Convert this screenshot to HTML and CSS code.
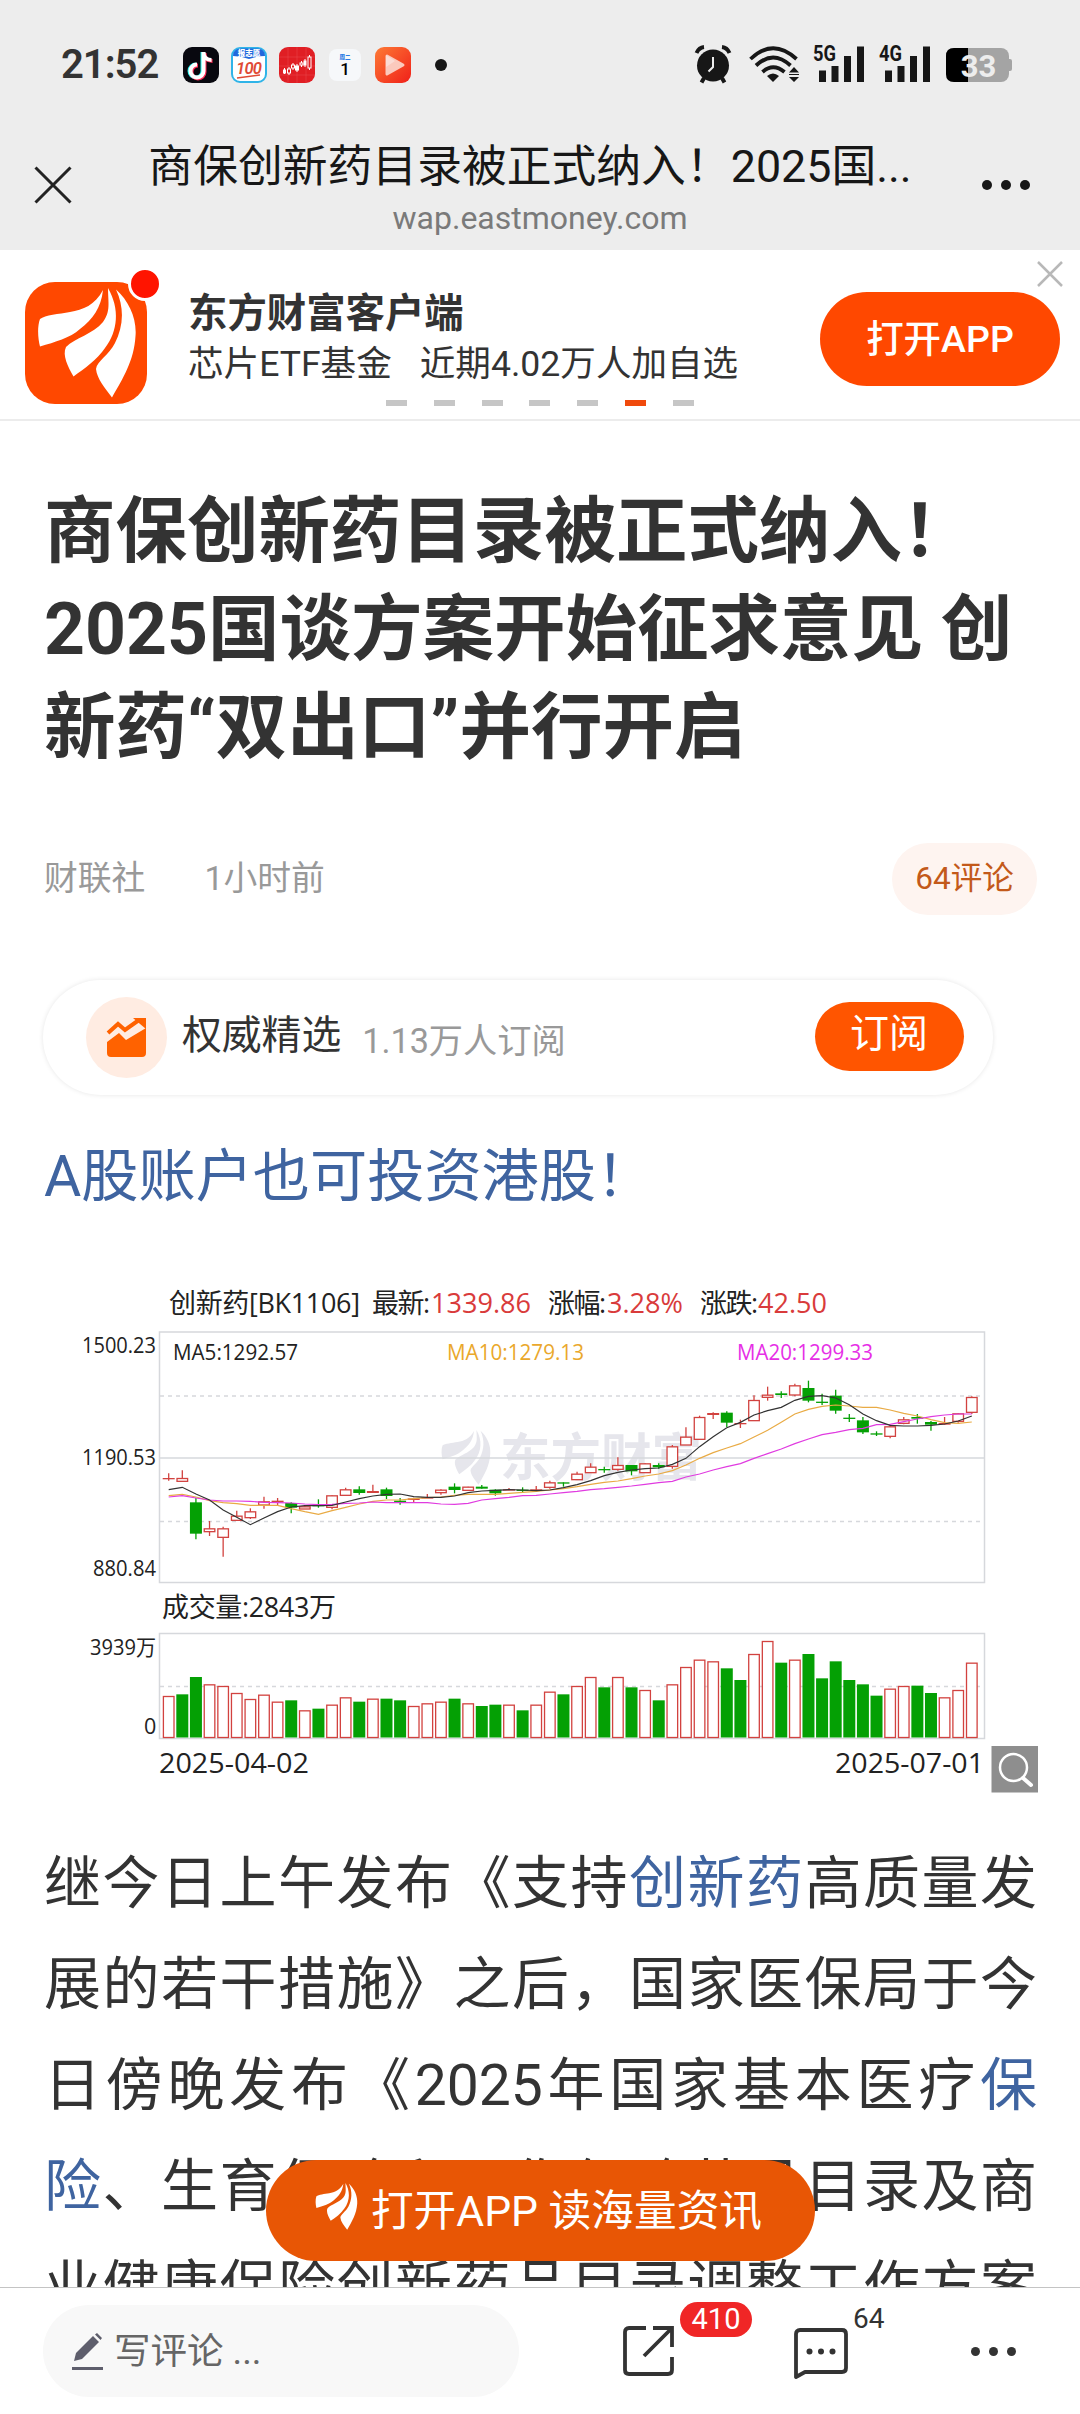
FILE: index.html
```html
<!DOCTYPE html>
<html lang="zh-CN">
<head>
  <meta charset="UTF-8">
  <meta name="viewport" content="width=device-width, initial-scale=1.0">
  <title>商保创新药目录被正式纳入！</title>
  <link rel="stylesheet" href="styles.css">
</head>
<body>
<svg class="defs" width="0" height="0">
  <symbol id="logo" viewBox="13 7 98 110">
    <path d="M78 9C70 24 58 29 45 31C34 33 20 34 15 38C12 46 13 58 15 65.5C30 61 45 57 55 48C68 38 76 27 78 9Z"/>
    <path d="M83 7C83 22 86 30 78 41C68 53 50 57 41 66C37 74 43 86 48.5 95.5C60 87 72 79 80 67C93 50 95 28 83 7Z"/>
    <path d="M91 8.5C104 20 112 38 110.5 55C109 80 98 97 87 116.5C80 107 72 98 71 88C72 80 84 74 90 62C98 46 100 28 91 8.5Z"/>
  </symbol>
</svg>

<header class="top">
  <div class="status-bar">
    <div class="time">21:52</div>
    <div class="app-icons">
      <svg width="36" height="36" viewBox="0 0 36 36">
        <rect width="36" height="36" rx="9" fill="#08080f"/>
        <g fill="none" stroke-width="4">
          <path d="M20.500 5v19a6.500 6.500 0 1 1-6.500-6.500M20.500 5c0 5 3 8 8 8" stroke="#25f4ee" transform="translate(-1 0)"/>
          <path d="M20.500 5v19a6.500 6.500 0 1 1-6.500-6.500M20.500 5c0 5 3 8 8 8" stroke="#fe2c55" transform="translate(1 1)"/>
          <path d="M20.500 5v19a6.500 6.500 0 1 1-6.500-6.500M20.500 5c0 5 3 8 8 8" stroke="#fff"/>
        </g>
      </svg>
      <svg width="36" height="36" viewBox="0 0 36 36">
        <rect x="1" y="1" width="34" height="34" rx="8" fill="#fff" stroke="#2fb4e8" stroke-width="2"/>
        <path d="M2 9Q2 1.500 10 1.500H26Q34 1.500 34 9Q26 9 18 12Q10 9 2 9Z" fill="#2068dc"/>
        <text x="18" y="8.500" class="tiny" text-anchor="middle" fill="#fff">报志愿</text>
        <text x="5" y="26.500" class="hundred" textLength="26">100</text>
        <path d="M6 31L29 28" stroke="#e04a35" stroke-width="1.500"/>
      </svg>
      <svg width="36" height="36" viewBox="0 0 36 36">
        <rect width="36" height="36" rx="9" fill="#e01e24"/>
        <path d="M0 10H36M0 19H36M0 28H36M9 0V36M18 0V36M27 0V36" stroke="#ea4a4c" stroke-width=".5"/>
        <g stroke="#fff" fill="none">
          <path d="M5.500 21v6M10 20v8M14 16v7M18 17v8M22.500 14v6M26 12v8M30.500 8v15"/>
          <rect x="4.500" y="23" width="2" height="3" fill="#fff"/><rect x="8.500" y="22" width="3" height="4" fill="#e01e24"/>
          <rect x="12.500" y="18" width="3" height="3" fill="#e01e24"/><rect x="16.500" y="19" width="3" height="4" fill="#fff"/>
          <rect x="21" y="16" width="3" height="2" fill="#e01e24"/><rect x="25" y="14" width="2" height="4" fill="#fff"/>
          <rect x="29" y="10" width="3" height="11" fill="#e01e24"/>
        </g>
      </svg>
      <svg width="36" height="36" viewBox="0 0 36 36">
        <rect x="2" y="2" width="32" height="32" rx="8" fill="#f6f8fa"/>
        <text x="18" y="12" class="tiny small" text-anchor="middle" fill="#2a7be4">周二</text>
        <text x="18" y="27.500" class="day" text-anchor="middle">1</text>
      </svg>
      <svg width="36" height="36" viewBox="0 0 36 36">
        <defs>
          <linearGradient id="play" x1="0" y1="0" x2="1" y2="1">
            <stop offset="0" stop-color="#fd7a35"/><stop offset="1" stop-color="#f02019"/>
          </linearGradient>
        </defs>
        <rect width="36" height="36" rx="9" fill="url(#play)"/>
        <path d="M12 9L28 18L12 27Z" fill="#fbc9bd" stroke="#fbc9bd" stroke-width="3" stroke-linejoin="round"/>
        <path d="M11 8L20 14L11 20Z" fill="#fbdbd4"/>
      </svg>
    </div>
    <span class="more-dot"></span>
    <div class="system-icons">
      <svg class="alarm" width="38" height="38" viewBox="0 0 38 38">
        <circle cx="19" cy="20.500" r="16" fill="#171717"/>
        <path d="M2.500 8Q5 2.500 10 2M35.500 8Q33 2.500 28 2" stroke="#171717" stroke-width="4" fill="none"/>
        <path d="M10 33L7.500 37.500M28 33L30.500 37.500" stroke="#171717" stroke-width="4"/>
        <path d="M19 12v10l-4.500 4.500" stroke="#ededed" stroke-width="2" fill="none"/>
      </svg>
      <svg class="wifi" width="51" height="37" viewBox="0 0 51 37">
        <g fill="none" stroke="#171717" stroke-width="3.800">
          <path d="M1.500 13Q24 -8.500 47.500 13"/>
          <path d="M7 19.500Q24 3.500 41.500 19.500"/>
          <path d="M13.500 26Q24 16.500 35.500 26"/>
        </g>
        <path d="M18 30Q24 25 30 30L24 36Z" fill="#171717"/>
        <path d="M45 21L50 26.500H40ZM45 36L50 31H40ZM40 28h10v1H40Z" fill="#171717"/>
      </svg>
      <svg class="signal" width="52" height="38" viewBox="0 0 52 38">
        <text x="0" y="16" class="net" textLength="23" lengthAdjust="spacingAndGlyphs">5G</text>
        <path d="M6 25.500h7V37H6ZM18.500 21h7V37h-7ZM31 11h7V37h-7ZM44 1.500h7V37h-7Z" fill="#171717"/>
      </svg>
      <svg class="signal" width="52" height="38" viewBox="0 0 52 38">
        <text x="0" y="16" class="net" textLength="23" lengthAdjust="spacingAndGlyphs">4G</text>
        <path d="M6 25.500h7V37H6ZM18.500 21h7V37h-7ZM31 11h7V37h-7ZM44 1.500h7V37h-7Z" fill="#171717"/>
      </svg>
      <svg class="battery" width="66" height="34" viewBox="0 0 66 34">
        <rect width="63" height="34" rx="8" fill="#a4a4a4"/>
        <rect x="60" y="11" width="6" height="12" rx="2" fill="#a4a4a4"/>
        <path d="M8 0H22V34H8Q0 34 0 26V8Q0 0 8 0Z" fill="#000"/>
        <text x="32.500" y="28.500" class="level" text-anchor="middle">33</text>
      </svg>
    </div>
  </div>

  <div class="nav-bar">
    <svg class="nav-close" width="38" height="38" viewBox="0 0 38 38">
      <path d="M1.500 1.500L36.500 36.500M36.500 1.500L1.500 36.500" stroke="#222" stroke-width="3"/>
    </svg>
    <div class="nav-title">
      <div class="page-title">商保创新药目录被正式纳入！2025国...</div>
      <div class="page-url">wap.eastmoney.com</div>
    </div>
    <div class="nav-more"><i></i><i></i><i></i></div>
  </div>
</header>

<section class="app-banner">
  <div class="app-logo">
    <svg width="98" height="110"><use href="#logo"/></svg>
    <span class="red-dot"></span>
  </div>
  <div class="app-info">
    <div class="app-name">东方财富客户端</div>
    <div class="app-desc"><span>芯片ETF基金</span><span>近期4.02万人加自选</span></div>
  </div>
  <button class="open-app">打开APP</button>
  <svg class="banner-close" width="26" height="26" viewBox="0 0 26 26">
    <path d="M1 1L25 25M25 1L1 25" stroke="#b8b8b8" stroke-width="2.500"/>
  </svg>
  <div class="pager"><i></i><i></i><i></i><i></i><i></i><i class="active"></i><i></i></div>
</section>

<main class="article">
  <h1>商保创新药目录被正式纳入！<br>2025国谈方案开始征求意见 创<br>新药“双出口”并行开启</h1>

  <div class="meta">
    <span class="source">财联社</span>
    <span class="ago">1小时前</span>
    <span class="comment-pill">64评论</span>
  </div>

  <div class="subscribe">
    <div class="sub-icon">
      <svg width="42" height="40" viewBox="0 0 42 40">
        <path d="M2 15L12 6L19 12L33 2" fill="none" stroke="#ff6200" stroke-width="4"/>
        <path d="M27 0H40V11Z" fill="#ff6200"/>
        <path d="M1 24L13 15L20 22L40 10V35Q40 39 36 39H5Q1 39 1 35Z" fill="#ff6200"/>
      </svg>
    </div>
    <span class="sub-name">权威精选</span>
    <span class="sub-count">1.13万人订阅</span>
    <button class="sub-btn">订阅</button>
  </div>

  <a class="promo">A股账户也可投资港股！</a>

  <svg class="chart" id="chart" width="993" height="520" viewBox="0 0 993 520">
    <g fill="#e6e6ec">
      <use href="#logo" x="396" y="150" width="50" height="55"/>
      <text x="455" y="196" class="watermark" textLength="202" lengthAdjust="spacingAndGlyphs">东方财富</text>
    </g>
    <g fill="none" stroke="#d6d8dc" stroke-width="1.500">
      <rect x="114.500" y="52" width="825" height="250.500"/>
      <path d="M115 178H939"/>
      <rect x="114.500" y="353.500" width="825" height="105"/>
      <path d="M115 116H939M115 241.500H939M115 406.500H939" stroke-dasharray="4 4"/>
    </g>
    <g id="plot"></g>
    <g class="chart-title">
      <text x="124" y="33" textLength="191">创新药[BK1106]</text>
      <text x="327" y="33" textLength="58">最新:</text>
      <text x="386" y="33" textLength="100" lengthAdjust="spacingAndGlyphs" class="up">1339.86</text>
      <text x="503" y="33" textLength="58">涨幅:</text>
      <text x="562" y="33" textLength="76" lengthAdjust="spacingAndGlyphs" class="up">3.28%</text>
      <text x="655" y="33" textLength="58">涨跌:</text>
      <text x="713" y="33" textLength="69" lengthAdjust="spacingAndGlyphs" class="up">42.50</text>
      <text x="117" y="337" textLength="174">成交量:2843万</text>
      <text x="114" y="493" textLength="150" lengthAdjust="spacingAndGlyphs">2025-04-02</text>
      <text x="790" y="493" textLength="149" lengthAdjust="spacingAndGlyphs">2025-07-01</text>
    </g>
    <g class="chart-label">
      <text x="37" y="73" textLength="74" lengthAdjust="spacingAndGlyphs">1500.23</text>
      <text x="37" y="185" textLength="74" lengthAdjust="spacingAndGlyphs">1190.53</text>
      <text x="48" y="295.500" textLength="63" lengthAdjust="spacingAndGlyphs">880.84</text>
      <text x="45" y="375" textLength="66" lengthAdjust="spacingAndGlyphs">3939万</text>
      <text x="99" y="454">0</text>
      <text x="128" y="80" textLength="125" lengthAdjust="spacingAndGlyphs">MA5:1292.57</text>
      <text x="402" y="80" textLength="137" lengthAdjust="spacingAndGlyphs" fill="#eaa82c">MA10:1279.13</text>
      <text x="692" y="80" textLength="136" lengthAdjust="spacingAndGlyphs" fill="#e62fe6">MA20:1299.33</text>
    </g>
    <g>
      <rect x="946.500" y="466" width="46.500" height="46.500" fill="#8e8e8e"/>
      <circle cx="968.500" cy="487.500" r="13.500" fill="none" stroke="#fff" stroke-width="2.500"/>
      <path d="M978 498L986 505" stroke="#fff" stroke-width="4" stroke-linecap="round"/>
    </g>
  </svg>

  <p class="content">继今日上午发布《支持<a>创新药</a>高质量发展的若干措施》之后，国家医保局于今日傍晚发布《2025年国家基本医疗<a>保险</a>、生育保险和工伤保险药品目录及商业健康保险创新药品目录调整工作方案</p>

  <button class="float-open">
    <svg width="43" height="47"><use href="#logo"/></svg>
    <span>打开APP 读海量资讯</span>
  </button>
</main>

<footer class="bottom-bar">
  <div class="comment-input">
    <svg width="32" height="37" viewBox="0 0 32 37">
      <path d="M2 28L4 20L21 3L27 9L10 26ZM23 1.500L25 0L30 5L28.500 7Z" fill="#5e5e6c"/>
      <path d="M0 35.500H31" stroke="#5e5e6c" stroke-width="3"/>
    </svg>
    <span>写评论 ...</span>
  </div>
  <div class="action share">
    <svg width="54" height="54" viewBox="0 0 54 54">
      <path d="M24 4H7Q3 4 3 8V46Q3 50 7 50H46Q50 50 50 46V33M31 4H50V23M49 5L22 32" fill="none" stroke="#333" stroke-width="3.800"/>
    </svg>
    <span class="badge">410</span>
  </div>
  <div class="action comments">
    <svg width="56" height="54" viewBox="0 0 56 54">
      <path d="M7 3H49Q53 3 53 7V41Q53 45 49 45H12L3 50V7Q3 3 7 3Z" fill="none" stroke="#333" stroke-width="3.800" stroke-linejoin="round"/>
      <g fill="#333"><circle cx="16.500" cy="24.500" r="3"/><circle cx="28" cy="24.500" r="3"/><circle cx="39.500" cy="24.500" r="3"/></g>
    </svg>
    <span class="count">64</span>
  </div>
  <div class="more"><i></i><i></i><i></i></div>
</footer>

<script src="chart.js"></script>
</body>
</html>
```

FILE: styles.css
```css
* {
  box-sizing: border-box;
  margin: 0;
  padding: 0;
}

:root {
  --text: #333;
  --gray: #999;
  --link: #3f64a0;
  --orange: #ff4800;
}

body {
  width: 1080px;
  height: 2414px;
  display: flex;
  flex-direction: column;
  overflow: hidden;
  background-color: #fff;
  color: var(--text);
  font-family: Roboto, "Noto Sans CJK SC", sans-serif;
  text-spacing-trim: space-all;
}

svg {
  display: block;
  flex-shrink: 0;
  overflow: visible;
}

.defs {
  position: absolute;
}

button {
  border: none;
  color: #fff;
  font-family: inherit;
}

/* Status bar and title */
.top {
  height: 250px;
  flex-shrink: 0;
  background-color: #ededed;
}

.status-bar {
  height: 128px;
  padding: 0 68px 0 61px;
  display: flex;
  align-items: center;
}

.time {
  width: 122px;
  font-size: 40px;
  font-weight: 600;
  letter-spacing: -1px;
}

.app-icons {
  display: flex;
  gap: 12px;
  margin-top: 2px;
}

.tiny {
  font-size: 7.5px;
  font-weight: 900;
}

.small {
  font-size: 5.5px;
}

.hundred {
  font-size: 16.5px;
  font-style: italic;
  font-weight: 600;
  fill: #e04a35;
}

.day {
  font-size: 17px;
  font-weight: 500;
}

.more-dot {
  width: 12px;
  height: 12px;
  margin: 2px 0 0 24px;
  border-radius: 50%;
  background-color: #171717;
}

.system-icons {
  margin-left: auto;
  display: flex;
  align-items: center;
}

.wifi {
  margin: 1px 13px 0 17px;
}

.signal {
  margin-right: 14px;
}

.battery {
  margin: 2px 0 0 1px;
}

.net {
  font-size: 21.5px;
  font-weight: 700;
  fill: #171717;
}

.level {
  font-size: 31px;
  font-weight: 700;
  fill: #ededed;
}

.nav-bar {
  height: 122px;
  padding: 0 50px 0 34px;
  display: flex;
}

.nav-close {
  margin-top: 38px;
}

.nav-title {
  width: 790px;
  margin-left: 63px;
  text-align: center;
}

.page-title {
  height: 70px;
  line-height: 78px;
  color: #171717;
  font-size: 44.8px;
  white-space: nowrap;
}

.page-url {
  padding-left: 20px;
  line-height: 40px;
  color: #7a7a7a;
  font-size: 32px;
}

.nav-more,
.more {
  display: flex;
}

.nav-more {
  gap: 9px;
  margin: 52px 0 0 auto;
}

.nav-more i {
  width: 10px;
  height: 10px;
  border-radius: 50%;
  background-color: #171717;
}

/* App download banner */
.app-banner {
  position: relative;
  height: 171px;
  flex-shrink: 0;
  padding: 0 20px 0 25px;
  display: flex;
  border-bottom: 2px solid #ececec;
}

.app-logo {
  position: relative;
  width: 122px;
  height: 122px;
  margin-top: 32px;
  padding: 6px 0 0 13px;
  border-radius: 30px;
  background-color: var(--orange);
}

.app-logo svg {
  fill: #fff;
}

.red-dot {
  position: absolute;
  top: -15px;
  right: -15px;
  width: 34px;
  height: 34px;
  border: 3px solid #fff;
  border-radius: 50%;
  background-color: #ff1400;
}

.app-info {
  margin: 38px 0 0 41px;
}

.app-name {
  height: 50px;
  line-height: 52px;
  font-size: 39.4px;
  font-weight: 700;
}

.app-desc {
  display: flex;
  gap: 28px;
  line-height: 52px;
  font-size: 35.6px;
  white-space: nowrap;
}

.open-app {
  width: 240px;
  height: 94px;
  margin: 42px 0 0 auto;
  padding-bottom: 7px;
  border-radius: 47px;
  background-color: var(--orange);
  font-size: 37.5px;
  font-weight: 500;
}

.banner-close {
  position: absolute;
  top: 11px;
  right: 17px;
}

.pager {
  position: absolute;
  left: 386px;
  bottom: 13px;
  display: flex;
  gap: 26.8px;
}

.pager i {
  width: 21px;
  height: 6px;
  background-color: #c6c6c6;
}

.pager .active {
  background-color: #f04a0c;
}

/* Article */
.article {
  position: relative;
  flex: 1;
  min-height: 0;
  padding: 62px 43px 0 44px;
  overflow: hidden;
}

h1 {
  height: 294px;
  font-size: 71.5px;
  line-height: 98px;
  font-weight: 700;
  white-space: nowrap;
}

.meta {
  height: 72px;
  margin-top: 66px;
  display: flex;
  align-items: center;
  color: var(--gray);
  font-size: 33.8px;
}

.source,
.ago {
  margin-bottom: 8px;
}

.ago {
  margin-left: 59px;
}

.comment-pill {
  width: 145px;
  height: 72px;
  margin-left: auto;
  border-radius: 36px;
  background-color: #fef4f0;
  color: #c3591a;
  font-size: 31.5px;
  line-height: 71px;
  text-align: center;
}

.subscribe {
  width: 950px;
  height: 115px;
  margin: 65px 0 0 -1px;
  padding: 0 29px 0 43px;
  display: flex;
  align-items: center;
  border-radius: 58px;
  box-shadow: 0 0 5px rgba(0, 0, 0, 0.1);
}

.sub-icon {
  width: 81px;
  height: 81px;
  display: flex;
  align-items: center;
  justify-content: center;
  border-radius: 50%;
  background-color: #ffece2;
}

.sub-name {
  margin: -12px 0 0 15px;
  font-size: 39.8px;
}

.sub-count {
  margin: 1px 0 0 21px;
  color: var(--gray);
  font-size: 34.2px;
}

.sub-btn {
  width: 149px;
  height: 69px;
  margin: -2px 0 0 auto;
  padding-right: 1px;
  border-radius: 35px;
  background-color: #ff5500;
  font-size: 39px;
  line-height: 62px;
  padding-bottom: 5px;
}

.promo {
  display: block;
  height: 100px;
  margin-top: 32px;
  line-height: 100px;
  font-size: 57.2px;
}

a {
  color: var(--link);
}

.chart {
  margin: 53px 0 0 1px;
  font-family: "Open Sans", "Noto Sans CJK SC", sans-serif;
}

.watermark {
  font-family: "Noto Sans CJK SC", sans-serif;
  font-size: 51px;
  font-weight: 700;
}

.chart-title {
  font-size: 27px;
  fill: #222;
}

.up {
  fill: #d93b3b;
}

.chart-label {
  font-size: 21.5px;
  fill: #222;
}

.content {
  margin-top: 33px;
  font-size: 57px;
  line-height: 101px;
  text-align: justify;
  text-align-last: justify;
}

.float-open {
  position: absolute;
  left: 266px;
  bottom: 26px;
  width: 549px;
  height: 101px;
  padding: 0 4px 8px 0;
  display: flex;
  align-items: center;
  justify-content: center;
  gap: 13px;
  border-radius: 51px;
  background-color: #e85605;
  font-size: 42.7px;
}

.float-open svg {
  fill: #fff;
}

/* Bottom bar */
.bottom-bar {
  height: 127px;
  flex-shrink: 0;
  padding: 17px 64px 0 43px;
  display: flex;
  border-top: 1px solid #c4c4c4;
}

.comment-input {
  width: 476px;
  height: 92px;
  padding-left: 29px;
  display: flex;
  align-items: center;
  gap: 10px;
  border-radius: 46px;
  background-color: #f8f8f8;
  color: #666;
  font-size: 36.5px;
}

.comment-input span {
  margin-bottom: 6px;
}

.action {
  position: relative;
}

.share {
  margin: 19px 0 0 103px;
}

.comments {
  margin: 22px 0 0 117px;
}

.badge {
  position: absolute;
  left: 58px;
  top: -22px;
  width: 72px;
  height: 35px;
  border-radius: 18px;
  background-color: #f02626;
  color: #fff;
  font-size: 29px;
  line-height: 34px;
  text-align: center;
}

.count {
  position: absolute;
  left: 60px;
  top: -25px;
  font-size: 28px;
}

.more {
  gap: 9px;
  margin: 42px 0 0 auto;
}

.more i {
  width: 9px;
  height: 9px;
  border-radius: 50%;
  background-color: #333;
}
```

FILE: chart.js
```js
const NS = 'http://www.w3.org/2000/svg';
const RED = '#d2423f';
const GREEN = '#04a004';
const plot = document.getElementById('plot');

// days that closed higher
const up = new Set([0, 1, 3, 4, 5, 6, 7, 8, 10, 12, 13, 15, 18, 19, 20, 22, 25, 27, 28, 30, 31, 33, 35, 37, 38, 39, 40, 42, 43, 44, 46, 53, 54, 57, 58, 59]);

// high, body top, body bottom, low (three units per pixel)
const candles = [
  [610, 624, 626, 632], [601, 624, 634, 634], [683, 697, 791, 808], [753, 775, 785, 798], [770, 775, 802, 860],
  [722, 737, 751, 751], [715, 724, 743, 747], [680, 694, 705, 716], [684, 692, 697, 705], [697, 699, 713, 730],
  [705, 709, 717, 717], [688, 705, 707, 713], [676, 676, 712, 718], [653, 658, 676, 676], [649, 658, 669, 674],
  [644, 663, 669, 669], [653, 658, 678, 687], [684, 692, 694, 704], [683, 685, 690, 697], [672, 682, 684, 684],
  [658, 659, 668, 674], [640, 650, 660, 670], [650, 650, 661, 661], [645, 650, 656, 656], [658, 659, 670, 677],
  [654, 658, 660, 661], [652, 659, 661, 667], [648, 658, 661, 664], [632, 637, 652, 656], [637, 637, 640, 650],
  [605, 611, 629, 629], [580, 590, 608, 608], [590, 597, 600, 608], [562, 585, 598, 602], [585, 585, 604, 616],
  [580, 580, 608, 608], [580, 585, 592, 596], [525, 529, 589, 596], [472, 500, 525, 525], [437, 441, 508, 508],
  [427, 429, 435, 447], [424, 428, 458, 471], [449, 459, 461, 474], [376, 390, 452, 452], [350, 374, 382, 392],
  [364, 370, 375, 384], [341, 346, 375, 379], [332, 354, 392, 397], [371, 395, 397, 405], [359, 377, 422, 431],
  [432, 443, 446, 456], [441, 451, 487, 492], [484, 490, 492, 498], [466, 469, 499, 505], [441, 448, 460, 463],
  [432, 441, 446, 461], [453, 456, 464, 482], [441, 459, 464, 464], [429, 430, 454, 458], [379, 381, 427, 432]
];

const ma = {
  '#e9ab45': [677, 673, 681, 692, 698, 701, 706, 706, 706, 716, 725, 733, 722, 712, 702, 694, 690, 690, 686, 683, 681, 676, 673, 673, 673, 670, 667, 664, 660, 656, 650, 643, 637, 633, 626, 618, 612, 602, 585, 565, 548, 534, 521, 501, 481, 457, 432, 418, 409, 405, 408, 412, 412, 420, 430, 438, 449, 458, 460, 456],
  '#e03be0': [681, 677, 684, 690, 693, 693, 694, 697, 698, 699, 702, 704, 703, 700, 699, 696, 698, 698, 698, 698, 702, 703, 700, 690, 686, 682, 677, 676, 672, 668, 664, 659, 656, 652, 648, 643, 638, 634, 621, 612, 600, 590, 581, 565, 551, 537, 521, 507, 494, 487, 479, 475, 464, 463, 455, 447, 440, 435, 432, 432],
  '#333': [659, 652, 672, 690, 720, 742, 764, 744, 725, 711, 707, 707, 706, 696, 686, 678, 673, 672, 680, 682, 682, 678, 668, 663, 661, 659, 660, 662, 660, 653, 644, 632, 617, 607, 600, 596, 594, 583, 565, 530, 500, 473, 457, 435, 422, 412, 391, 379, 377, 384, 404, 432, 452, 466, 468, 468, 466, 462, 453, 438]
};

const greenVolume = new Set([1, 2, 9, 11, 14, 16, 17, 21, 23, 24, 26, 29, 32, 34, 36, 41, 42, 45, 47, 48, 49, 50, 51, 52, 55, 56]);
const volumes = [378, 373, 321, 343, 348, 369, 387, 374, 395, 391, 421, 416, 404, 382, 395, 386, 386, 391, 408, 400, 395, 386, 400, 408, 404, 404, 421, 404, 365, 373, 348, 321, 352, 321, 352, 360, 391, 343, 291, 269, 274, 295, 330, 252, 213, 278, 269, 252, 325, 274, 330, 343, 377, 356, 348, 347, 369, 382, 360, 278];

function add(tag, attrs) {
  const el = document.createElementNS(NS, tag);
  for (const key in attrs) el.setAttribute(key, attrs[key]);
  plot.appendChild(el);
}

const px = i => 123.7 + i * 13.612;
const py = v => v / 3 - 10;

function box(x, top, bottom, color, hollow) {
  const h = bottom - top;
  if (hollow && h > 2.5) {
    add('rect', { x: x - 5.3, y: top + 0.5, width: 10.6, height: h - 0.5, fill: '#fff', stroke: color, 'stroke-width': 1.3 });
  } else {
    add('rect', { x: x - 6, y: top, width: 12, height: Math.max(h, 1.3), fill: color });
  }
}

candles.forEach(([high, top, bottom, low], i) => {
  const x = px(i);
  const color = up.has(i) ? RED : GREEN;
  add('path', { d: `M${x} ${py(high)}V${py(low)}`, stroke: color, 'stroke-width': 1.3 });
  box(x, py(top), py(bottom), color, up.has(i));
});

for (const color in ma) {
  add('polyline', { points: ma[color].map((v, i) => `${px(i)},${py(v)}`).join(' '), fill: 'none', stroke: color, 'stroke-width': 1.2 });
}

volumes.forEach((v, i) => {
  const green = greenVolume.has(i);
  box(px(i), v / 3 + 290, 457.5, green ? GREEN : RED, !green);
});
```
